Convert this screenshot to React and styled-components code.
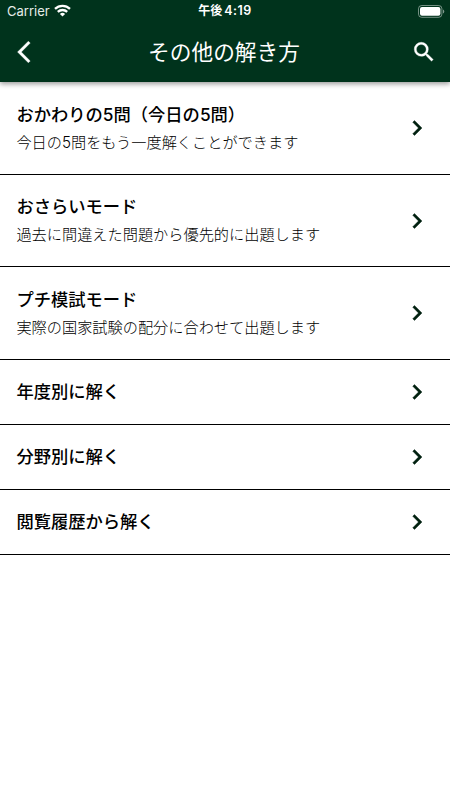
import React from 'react';
import styled, { createGlobalStyle } from 'styled-components'
import { MdArrowBackIosNew, MdChevronRight, MdSearch } from 'react-icons/md';

const MENUS = [
    { id: 0, title: 'おかわりの5問（今日の5問）', text: '今日の5問をもう一度解くことができます' },
    { id: 1, title: 'おさらいモード', text: '過去に間違えた問題から優先的に出題します' },
    { id: 2, title: 'プチ模試モード', text: '実際の国家試験の配分に合わせて出題します' },
    { id: 3, title: '年度別に解く' },
    { id: 4, title: '分野別に解く' },
    { id: 5, title: '閲覧履歴から解く' },
];

const App = () => {
    return (
        <Screen>
            <GlobalStyle />
            <Header>
                {/* ステータスバー */}
                <StatusBar>
                    <Carrier>
                        Carrier
                        <WifiIcon />
                    </Carrier>
                    <Time>午後<span>4:19</span></Time>
                    <Battery />
                </StatusBar>
                {/* ナビゲーション */}
                <NavBar>
                    <NavButton aria-label='戻る'><MdArrowBackIosNew /></NavButton>
                    <PageTitle>その他の解き方</PageTitle>
                    <NavButton aria-label='検索'><MdSearch /></NavButton>
                </NavBar>
            </Header>
            {/* メニュー */}
            <MenuList>
                {MENUS.map((menu) => (
                    <MenuItem key={menu.id} $tall={!!menu.text}>
                        <div>
                            <MenuTitle>{menu.title}</MenuTitle>
                            {menu.text && <MenuText>{menu.text}</MenuText>}
                        </div>
                        <Arrow />
                    </MenuItem>
                ))}
            </MenuList>
        </Screen>
    );
};

const WifiIcon = () => (
    <svg width='17' height='13' viewBox='0 0 17 13' fill='none' stroke='#fff' strokeWidth='2.3'>
        <path d='M1 4.9a10.8 10.8 0 0 1 15 0' />
        <path d='M3.8 7.9a6.8 6.8 0 0 1 9.4 0' />
        <path d='M8.5 12.4 5.9 9.9a3.8 3.8 0 0 1 5.2 0z' fill='#fff' stroke='none' />
    </svg>
);

const Battery = () => (
    <svg width='27' height='13' viewBox='0 0 27 13'>
        <rect x='0.5' y='0.5' width='23.4' height='11.8' rx='3.2' fill='none' stroke='#fff' strokeOpacity='0.45' />
        <rect x='2' y='2' width='20.4' height='8.8' rx='2' fill='#fff' />
        <path d='M25 4.4v4a2.2 2.2 0 0 0 0-4z' fill='#fff' fillOpacity='0.5' />
    </svg>
);

const GlobalStyle = createGlobalStyle`
    body{
        margin: 0;
        background: #fff;
        font-family: Inter, 'Noto Sans CJK JP', sans-serif;
    }
`;

const Screen = styled.div`
    width: 100%;
    min-height: 800px;
    background: #fff;
`;

const Header = styled.header`
    height: 82px;
    position: relative;
    color: #fff;
    background: #00331c;
    box-shadow: 0 2px 5px rgba(0,0,0,0.4);
`;

const StatusBar = styled.div`
    height: 22px;
    padding: 0 5px 0 7px;
    display: grid;
    grid-template-columns: 1fr auto 1fr;
    align-items: center;
    svg:last-child{
        justify-self: end;
    }
`;

const Carrier = styled.div`
    display: flex;
    align-items: center;
    gap: 4px;
    font-size: 13px;
    line-height: 22px;
    color: #e6ece8;
    svg{
        margin-top: -1px;
    }
`;

const Time = styled.div`
    margin-right: 2px;
    font-size: 12px;
    font-weight: 600;
    line-height: 22px;
    span{
        margin-left: 2px;
        font-size: 12.5px;
        letter-spacing: 0.5px;
    }
`;

const NavBar = styled.div`
    height: 60px;
    padding: 0 13px 0 11px;
    display: flex;
    justify-content: space-between;
    align-items: center;
`;

const NavButton = styled.button`
    all: unset;
    display: flex;
    cursor: pointer;
    svg{
        font-size: 26px;
    }
    /* 透明な枠のpathは除く */
    path:not([fill='none']){
        stroke: #fff;
        stroke-width: 0.3px;
    }
    svg{
        stroke: none;
    }
`;

const PageTitle = styled.h1`
    margin: 0;
    font-size: 21.7px;
    font-weight: 400;
    line-height: 60px;
`;

const MenuList = styled.ul`
    margin: 0;
    padding: 0.8px 0 0;
    list-style: none;
`;

const MenuItem = styled.li`
    height: ${(props) => (props.$tall ? '92.3px' : '65.2px')};
    padding: 0 18px 0 16.4px;
    box-sizing: border-box;
    display: flex;
    justify-content: space-between;
    align-items: center;
    border-bottom: 1px solid #000;
    cursor: pointer;
`;

const MenuTitle = styled.div`
    font-size: 17.3px;
    font-weight: 500;
    line-height: 28px;
    color: #000;
`;

const MenuText = styled.div`
    font-size: 15.2px;
    font-weight: 300;
    line-height: 27px;
    color: #000;
`;

const Arrow = styled(MdChevronRight)`
    font-size: 30px;
    color: #00200f;
    stroke: none;
    path:not([fill='none']){
        stroke: #00200f;
        stroke-width: 0.3px;
    }
`;

export default App;
